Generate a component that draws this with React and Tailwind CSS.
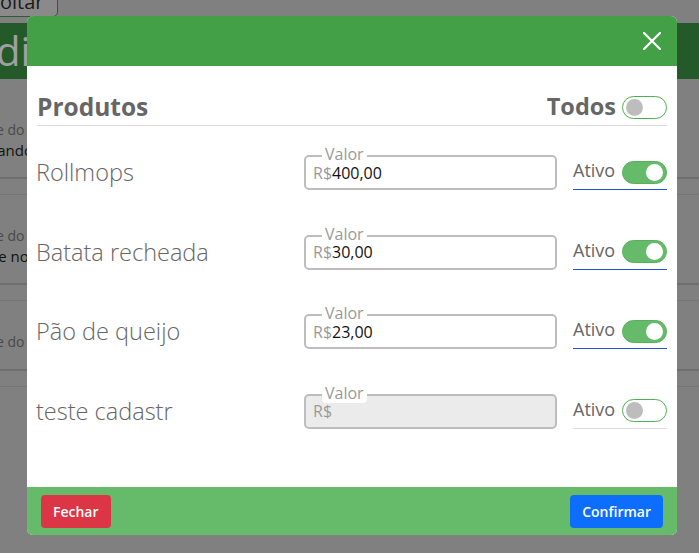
import React from "react";

function Toggle({ on }) {
  return on ? (
    <div className="flex h-[23px] w-[45px] items-center justify-end rounded-full border border-[#58b05c] bg-[#66bb6a] pr-[3px]">
      <div className="h-[17px] w-[17px] rounded-full bg-white" />
    </div>
  ) : (
    <div className="flex h-[23px] w-[45px] items-center justify-start rounded-full border border-[#4caf50] bg-white pl-[3px]">
      <div className="h-[17px] w-[17px] rounded-full bg-[#bdbdbd]" />
    </div>
  );
}

const rows = [
  { name: "Rollmops", value: "400,00", on: true, line: "border-[#2450d8]" },
  { name: "Batata recheada", value: "30,00", on: true, line: "border-[#2450d8]" },
  { name: "Pão de queijo", value: "23,00", on: true, line: "border-[#2450d8]" },
  { name: "teste cadastr", value: "", on: false, line: "border-[#dddddd]", disabled: true },
];

function BgCard({ value }) {
  return (
    <div className="h-[106px] pt-[6px]">
      <div className="text-[14px] leading-[20px] text-[#4a4a4a] -ml-[36px]">Nome do produto</div>
      <div className="text-[15px] leading-[20px] text-[#111] -ml-[36px]">{value}</div>
      <div className="mt-[17px] border-b-2 border-[#6e6e6e]" />
      <div className="mt-[15px] border-b border-[#767676]" />
    </div>
  );
}

export default function App() {
  return (
    <div
      className="relative h-[553px] w-[699px] overflow-hidden bg-[#808080]"
      style={{ fontFamily: '"Open Sans", "Noto Sans", sans-serif' }}
    >
      {/* background page */}
      <div className="-mt-[14px] -ml-[21px] h-[31px] w-[79px] rounded-[5px] border border-[#2e5e30] bg-[#8a8a8a] pl-[8px] text-[20px] leading-[30px] text-[#1a1a1a]">
        Voltar
      </div>
      <div className="mt-[6px] h-[56px] bg-[#245a2a] text-[40px] leading-[56px] text-[#a0a0a0] -indent-[4px] whitespace-nowrap">
        dição
      </div>
      <div className="pt-[35px]">
        <BgCard value="Buscando" />
        <BgCard value="Nome novo" />
        <BgCard value="" />
      </div>

      {/* modal */}
      <div className="absolute left-[27px] top-[16px] w-[650px] overflow-hidden rounded-[6px] bg-white">
        <div className="flex h-[50px] items-center justify-end bg-[#43a047] pr-[16px]">
          <svg width="18" height="18" viewBox="0 0 18 18">
            <path d="M1 1 L17 17 M17 1 L1 17" stroke="white" strokeWidth="2.2" strokeLinecap="square" />
          </svg>
        </div>
        <div className="h-[421px] px-[10px] pt-[20px]">
          <div className="flex h-[40px] items-center justify-between border-b border-[#dddddd] pt-[3px]">
            <div className="text-[24.5px] font-bold text-[#666]">Produtos</div>
            <div className="flex items-center gap-[6px]">
              <div className="text-[23.5px] font-bold text-[#666]">Todos</div>
              <Toggle on={false} />
            </div>
          </div>
          <div className="mt-[7px]">
            {rows.map((r) => (
              <div key={r.name} className="flex h-[79.5px] items-center">
                <div className="flex-1 text-[23.5px] font-light text-[#666] -ml-[1px]">{r.name}</div>
                <div
                  className={
                    "relative flex h-[35px] w-[253px] items-center rounded-[5px] border-2 border-[#bdbdbd] pl-[7px] text-[16px] " +
                    (r.disabled ? "bg-[#ebebeb]" : "bg-white")
                  }
                >
                  <span className="text-[#9a9a9a]">R$</span>
                  <span className="text-[#111]">{r.value}</span>
                  <span
                    className={
                      "absolute -top-[13px] left-[16px] px-[3px] text-[16px] leading-[20px] text-[#9a9a9a] bg-white " +
                      (r.disabled ? "rounded-[4px]" : "")
                    }
                  >
                    Valor
                  </span>
                </div>
                <div className={"ml-[16px] flex h-[35px] w-[94px] items-center justify-between border-b " + r.line}>
                  <span className="-mt-[3px] text-[18px] text-[#666]">Ativo</span>
                  <Toggle on={r.on} />
                </div>
              </div>
            ))}
          </div>
        </div>
        <div className="flex h-[48px] items-center justify-between bg-[#66bb6a] px-[14px]">
          <button className="h-[33px] rounded-[4px] bg-[#dc3545] px-[12px] text-[14px] font-semibold text-white">
            Fechar
          </button>
          <button className="h-[33px] rounded-[4px] bg-[#0d6efd] px-[12px] text-[14px] font-semibold text-white">
            Confirmar
          </button>
        </div>
      </div>
    </div>
  );
}
